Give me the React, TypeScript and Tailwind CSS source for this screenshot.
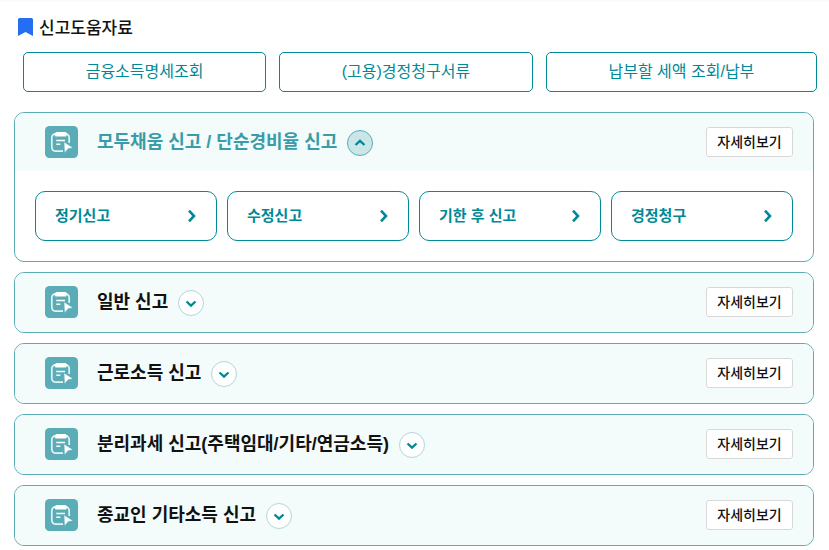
import { useState } from 'react';
import clsx from 'clsx';

const helpLinks = ['금융소득명세조회', '(고용)경정청구서류', '납부할 세액 조회/납부'];

const sections = [
  { title: '모두채움 신고 / 단순경비율 신고', items: ['정기신고', '수정신고', '기한 후 신고', '경정청구'] },
  { title: '일반 신고', items: ['정기신고', '수정신고', '기한 후 신고', '경정청구'] },
  { title: '근로소득 신고', items: ['정기신고', '수정신고', '기한 후 신고', '경정청구'] },
  { title: '분리과세 신고(주택임대/기타/연금소득)', items: ['정기신고', '수정신고', '기한 후 신고', '경정청구'] },
  { title: '종교인 기타소득 신고', items: ['정기신고', '수정신고', '기한 후 신고', '경정청구'] },
];

function BookmarkIcon() {
  return (
    <svg width="15" height="18" viewBox="0 0 15 18" aria-hidden="true" className="shrink-0">
      <path d="M1.5 0h12A1.5 1.5 0 0 1 15 1.5V18l-7.5-4L0 18V1.5A1.5 1.5 0 0 1 1.5 0z" fill="#256ef4" />
    </svg>
  );
}

function ReportIcon() {
  return (
    <svg width="33" height="32" viewBox="0 0 33 32" fill="none" aria-hidden="true" className="shrink-0">
      <rect width="33" height="32" rx="4.5" fill="#5aadb7" />
      <path
        d="M18 25.2h-7.2a4 4 0 0 1-4-4V11.8a4 4 0 0 1 4-4h9.4a4 4 0 0 1 4 4V17"
        stroke="#e4f3f4"
        strokeWidth="1.7"
      />
      <path d="M11.5 6h9l2 1.8-1.5 2.6H10.5L9 7.8z" fill="#fff" />
      <path d="M11.3 14.5h8.7M11.3 18.2h4" stroke="#fff" strokeWidth="1.4" />
      <path d="M19 16l9 5.8-4.9.9-3.6 4.3z" fill="#fff" stroke="#5aadb7" strokeWidth="0.5" />
    </svg>
  );
}

function Toggle({ title, open, onClick }: { title: string; open: boolean; onClick: () => void }) {
  return (
    <button
      type="button"
      aria-label={title}
      aria-expanded={open}
      onClick={onClick}
      className={clsx(
        'mt-px flex size-[26px] shrink-0 items-center justify-center rounded-full border',
        open ? 'border-[#5aadb7] bg-[#cbe6e9]' : 'border-[#b5d5d9] bg-white'
      )}
    >
      <svg width="12" height="10" viewBox="0 0 12 10" fill="none" stroke="#008997" strokeWidth="2.3" aria-hidden="true">
        <path d={open ? 'M1.5 7L6 2.8 10.500 7' : 'M1.5 3.500L6 7.700l4.500-4.200'} />
      </svg>
    </button>
  );
}

export default function App() {
  const [openIndex, setOpenIndex] = useState(0);

  return (
    <main className="border-t-2 border-[#fafafa] bg-white pr-[15px] pl-[14px] pb-1 font-['Liberation_Sans','Noto_Sans_CJK_KR',sans-serif] text-[#111]">
      <h2 className="flex items-center gap-[6px] pt-3 pl-1 text-[17px] leading-[26px] font-medium">
        <BookmarkIcon />
        <span className="font-['Noto_Sans_CJK_KR',sans-serif]">신고도움자료</span>
      </h2>

      <div className="mt-3 -mr-[3px] ml-[9px] flex gap-[13px]">
        {helpLinks.map((label) => (
          <button
            key={label}
            type="button"
            className="h-10 flex-auto rounded-[5px] border border-[#008997] text-base text-[#008997]"
          >
            {label}
          </button>
        ))}
      </div>

      <div className="mt-5 flex flex-col gap-[10px]">
        {sections.map(({ title, items }, index) => {
          const open = index === openIndex;
          return (
            <section key={title} className="overflow-hidden rounded-[10px] border border-[#5aadb7] bg-white">
              <div className={clsx('flex items-center bg-[#f3fbfb] pr-5 pl-[30px]', open ? 'h-[58px]' : 'h-[59px] pb-px')}>
                <ReportIcon />
                <h3
                  className={clsx(
                    'mr-[10px] ml-[19px] text-lg leading-[26px] font-bold',
                    open && 'text-[#3a9ca8]'
                  )}
                >
                  {title}
                </h3>
                <Toggle title={title} open={open} onClick={() => setOpenIndex(open ? -1 : index)} />
                <button
                  type="button"
                  className="ml-auto h-[30px] w-[87px] rounded-[3px] border border-[#d8d8d8] bg-white text-sm font-medium text-[#111]"
                >
                  자세히보기
                </button>
              </div>

              {open && (
                <div className="grid grid-cols-4 gap-[10px] p-5">
                  {items.map((item) => (
                    <button
                      key={item}
                      type="button"
                      className="flex h-[50px] items-center justify-between rounded-[10px] border border-[#008997] pr-5 pl-[19px] text-[15px] font-bold text-[#008997]"
                    >
                      {item}
                      <svg width="8" height="14" viewBox="0 0 8 14" fill="none" stroke="#008997" strokeWidth="2.6" aria-hidden="true">
                        <path d="M1 1.700L6 7l-5 5.300" />
                      </svg>
                    </button>
                  ))}
                </div>
              )}
            </section>
          );
        })}
      </div>
    </main>
  );
}
